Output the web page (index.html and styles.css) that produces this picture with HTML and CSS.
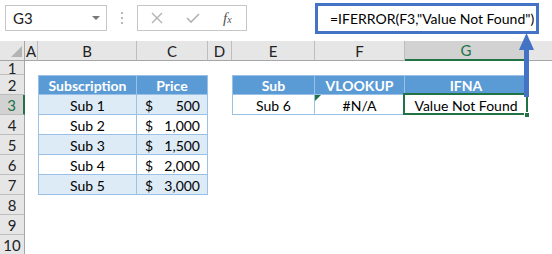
FILE: index.html
```html
<!DOCTYPE html>
<html lang="en">
<head>
    <meta charset="UTF-8">
    <title>IFERROR vs IFNA</title>
    <link rel="stylesheet" href="styles.css">
</head>
<body>
    <div class="app">
        <div class="formula-bar">
            <div class="name-box">
                <span>G3</span>
                <span class="caret"></span>
            </div>
            <div class="grip"><i></i><i></i><i></i></div>
            <div class="fx-box">
                <svg class="fx-icon" width="12" height="12" viewBox="0 0 12 12">
                    <path d="M1 1 L11 11 M11 1 L1 11" stroke="#b3b3b3" stroke-width="1.4" fill="none"/>
                </svg>
                <svg class="fx-icon" width="14" height="12" viewBox="0 0 14 12">
                    <path d="M1 6 L5 10 L13 2" stroke="#b3b3b3" stroke-width="1.6" fill="none"/>
                </svg>
                <span class="fx">f<sub>x</sub></span>
            </div>
            <div class="formula-input">
                <div class="formula-highlight">=IFERROR(F3,"Value Not Found")</div>
            </div>
        </div>

        <div class="sheet">
            <!-- column headers -->
            <div class="corner"><span class="corner-tri"></span></div>
            <div class="col-h">A</div>
            <div class="col-h">B</div>
            <div class="col-h">C</div>
            <div class="col-h">D</div>
            <div class="col-h">E</div>
            <div class="col-h">F</div>
            <div class="col-h active">G</div>
            <div class="col-h last"></div>

            <!-- row 1 -->
            <div class="row-h">1</div>
            <div class="blank span-all"></div>

            <!-- row 2 -->
            <div class="row-h">2</div>
            <div class="blank"></div>
            <div class="t-head first">Subscription</div>
            <div class="t-head">Price</div>
            <div class="blank"></div>
            <div class="t-head first">Sub</div>
            <div class="t-head">VLOOKUP</div>
            <div class="t-head">IFNA</div>
            <div class="blank"></div>

            <!-- row 3 -->
            <div class="row-h active">3</div>
            <div class="blank"></div>
            <div class="t-cell first alt">Sub 1</div>
            <div class="t-cell price alt"><span>$</span><span>500</span></div>
            <div class="blank"></div>
            <div class="t-cell first">Sub 6</div>
            <div class="t-cell error">#N/A</div>
            <div class="t-cell selected">Value Not Found<span class="fill-handle"></span></div>
            <div class="blank"></div>

            <!-- row 4 -->
            <div class="row-h">4</div>
            <div class="blank"></div>
            <div class="t-cell first">Sub 2</div>
            <div class="t-cell price"><span>$</span><span>1,000</span></div>
            <div class="blank span-rest"></div>

            <!-- row 5 -->
            <div class="row-h">5</div>
            <div class="blank"></div>
            <div class="t-cell first alt">Sub 3</div>
            <div class="t-cell price alt"><span>$</span><span>1,500</span></div>
            <div class="blank span-rest"></div>

            <!-- row 6 -->
            <div class="row-h">6</div>
            <div class="blank"></div>
            <div class="t-cell first">Sub 4</div>
            <div class="t-cell price"><span>$</span><span>2,000</span></div>
            <div class="blank span-rest"></div>

            <!-- row 7 -->
            <div class="row-h">7</div>
            <div class="blank"></div>
            <div class="t-cell first alt">Sub 5</div>
            <div class="t-cell price alt"><span>$</span><span>3,000</span></div>
            <div class="blank span-rest"></div>

            <!-- rows 8-10 -->
            <div class="row-h">8</div>
            <div class="blank span-all"></div>
            <div class="row-h">9</div>
            <div class="blank span-all"></div>
            <div class="row-h">10</div>
            <div class="blank span-all"></div>
        </div>

        <!-- annotation arrow from G3 up to the formula -->
        <svg class="arrow" width="552" height="254" viewBox="0 0 552 254">
            <rect x="524" y="48" width="5" height="49" fill="#4472c4"/>
            <polygon points="526.5,33 519,50 534,50" fill="#4472c4"/>
        </svg>
    </div>
</body>
</html>
```

FILE: styles.css
```css
* {
    box-sizing: border-box;
}
body {
    margin: 0;
    background-color: #fff;
    font-family: 'Lato', 'Liberation Sans', sans-serif;
    font-size: 14px;
    color: #000;
}
.app {
    position: relative;
    width: 552px;
    height: 254px;
    overflow: hidden;
}

/* formula bar */
.formula-bar {
    display: flex;
    align-items: center;
    height: 26px;
    margin-top: 5px;
    margin-bottom: 10px;
}
.name-box {
    width: 102px;
    height: 26px;
    margin-left: 5px;
    border: 1px solid #c6c6c6;
    display: flex;
    align-items: center;
    justify-content: space-between;
    padding: 0 6px 0 7px;
    color: #222;
    font-size: 15px;
}
.caret {
    width: 0;
    height: 0;
    border-left: 4px solid transparent;
    border-right: 4px solid transparent;
    border-top: 4px solid #777;
}
.grip {
    width: 30px;
    display: flex;
    flex-direction: column;
    align-items: center;
    gap: 3px;
}
.grip i {
    width: 2px;
    height: 2px;
    background-color: #b8b8b8;
}
.fx-box {
    width: 110px;
    height: 26px;
    border: 1px solid #c6c6c6;
    display: flex;
    align-items: center;
    padding-left: 13px;
    gap: 23px;
}
.fx {
    font-family: 'Liberation Serif', serif;
    font-style: italic;
    font-size: 15px;
    color: #555;
}
.fx sub {
    font-size: 10px;
    vertical-align: 0;
}
.formula-input {
    flex: 1;
    height: 26px;
    display: flex;
    align-items: center;
    padding-left: 68px;
}
.formula-highlight {
    flex: none;
    width: 224px;
    height: 31px;
    border: 3px solid #4472c4;
    background-color: #fff;
    display: flex;
    align-items: center;
    padding-left: 12px;
    white-space: nowrap;
    font-size: 14px;
}

/* sheet grid */
.sheet {
    display: grid;
    grid-template-columns: 25px 13px 99px 71px 24px 83px 90px 123px 1fr;
    grid-template-rows: 20px 14px repeat(9, 20px);
}
.corner {
    position: relative;
    background-color: #e6e6e6;
    border-right: 1px solid #a6a6a6;
    border-bottom: 1px solid #a6a6a6;
}
.corner-tri {
    position: absolute;
    right: 2px;
    bottom: 3px;
    width: 0;
    height: 0;
    border-left: 11px solid transparent;
    border-bottom: 11px solid #b4b4b4;
}
.col-h {
    background-color: #e6e6e6;
    border-right: 1px solid #bdbdbd;
    border-bottom: 1px solid #a6a6a6;
    display: flex;
    align-items: center;
    justify-content: center;
    color: #222;
    font-size: 15px;
}
.col-h.active {
    background-color: #d2d2d2;
    color: #217346;
    border-bottom: 2px solid #217346;
}
.col-h.last {
    border-right: none;
}
.row-h {
    background-color: #e6e6e6;
    border-right: 1px solid #a6a6a6;
    border-bottom: 1px solid #bdbdbd;
    display: flex;
    align-items: center;
    justify-content: center;
    color: #222;
    font-size: 15px;
}
.row-h.active {
    background-color: #d2d2d2;
    color: #217346;
    border-right: 2px solid #217346;
}
.blank {
    background-color: #fff;
}
.span-all {
    grid-column: 2 / -1;
}
.span-rest {
    grid-column: 5 / -1;
}

/* table cells */
.t-head,
.t-cell {
    display: flex;
    align-items: center;
    justify-content: center;
    padding-top: 1px;
    border-right: 1px solid #9bc2e6;
    border-bottom: 1px solid #9bc2e6;
    white-space: nowrap;
}
.t-head {
    background-color: #5b9bd5;
    color: #fff;
    font-weight: bold;
    border-top: 1px solid #9bc2e6;
}
.first {
    border-left: 1px solid #9bc2e6;
}
.t-cell {
    background-color: #fff;
}
.t-cell.alt {
    background-color: #ddebf7;
}
.t-cell.price {
    justify-content: space-between;
    padding: 1px 7px 0 8px;
}
.t-cell.error {
    position: relative;
}
.t-cell.error::before {
    content: '';
    position: absolute;
    left: 0;
    top: 0;
    border-top: 6px solid #217346;
    border-right: 6px solid transparent;
}
.t-cell.selected {
    position: relative;
}
.t-cell.selected::after {
    content: '';
    position: absolute;
    left: -2px;
    top: -2px;
    right: -1px;
    bottom: -1px;
    border: 2px solid #217346;
}
.fill-handle {
    position: absolute;
    right: -3px;
    bottom: -4px;
    width: 6px;
    height: 6px;
    background-color: #217346;
    border: 1px solid #fff;
    z-index: 1;
}

.arrow {
    position: absolute;
    left: 0;
    top: 0;
    pointer-events: none;
}
```
